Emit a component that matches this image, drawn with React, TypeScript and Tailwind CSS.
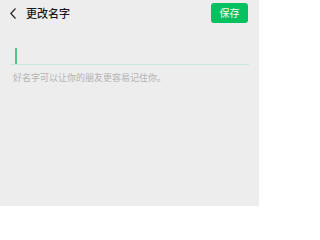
import React from "react";

export default function App() {
  return (
    <div className="w-[259px] h-[206px] bg-[#ededed] font-['Noto_Sans_CJK_SC',sans-serif] overflow-hidden">
      {/* top bar */}
      <div className="h-[27px] flex items-center pl-[10px] pr-[11px]">
        <svg width="6" height="11" viewBox="0 0 6 11" className="shrink-0">
          <path d="M5.5 0.5 L0.8 5.5 L5.5 10.5" fill="none" stroke="#1a1a1a" strokeWidth="1.1" />
        </svg>
        <span className="ml-[10px] text-[11px] leading-none text-[#1a1a1a] font-medium">更改名字</span>
        <button className="ml-auto w-[37px] h-[20px] rounded-[3px] bg-[#07c160] text-[#f2fff7] text-[10px] leading-none flex items-center justify-center -mt-[1px]">
          保存
        </button>
      </div>
      {/* input */}
      <div className="mt-[20px] mx-[10px] h-[18px] border-b border-[#c9e9d8] flex items-center pl-[5px]">
        <span className="w-[1.5px] h-[16px] bg-[#4fc787]" />
      </div>
      <p className="mt-[8px] ml-[13px] text-[9px] leading-none text-[#b3b3b3]">好名字可以让你的朋友更容易记住你。</p>
    </div>
  );
}
